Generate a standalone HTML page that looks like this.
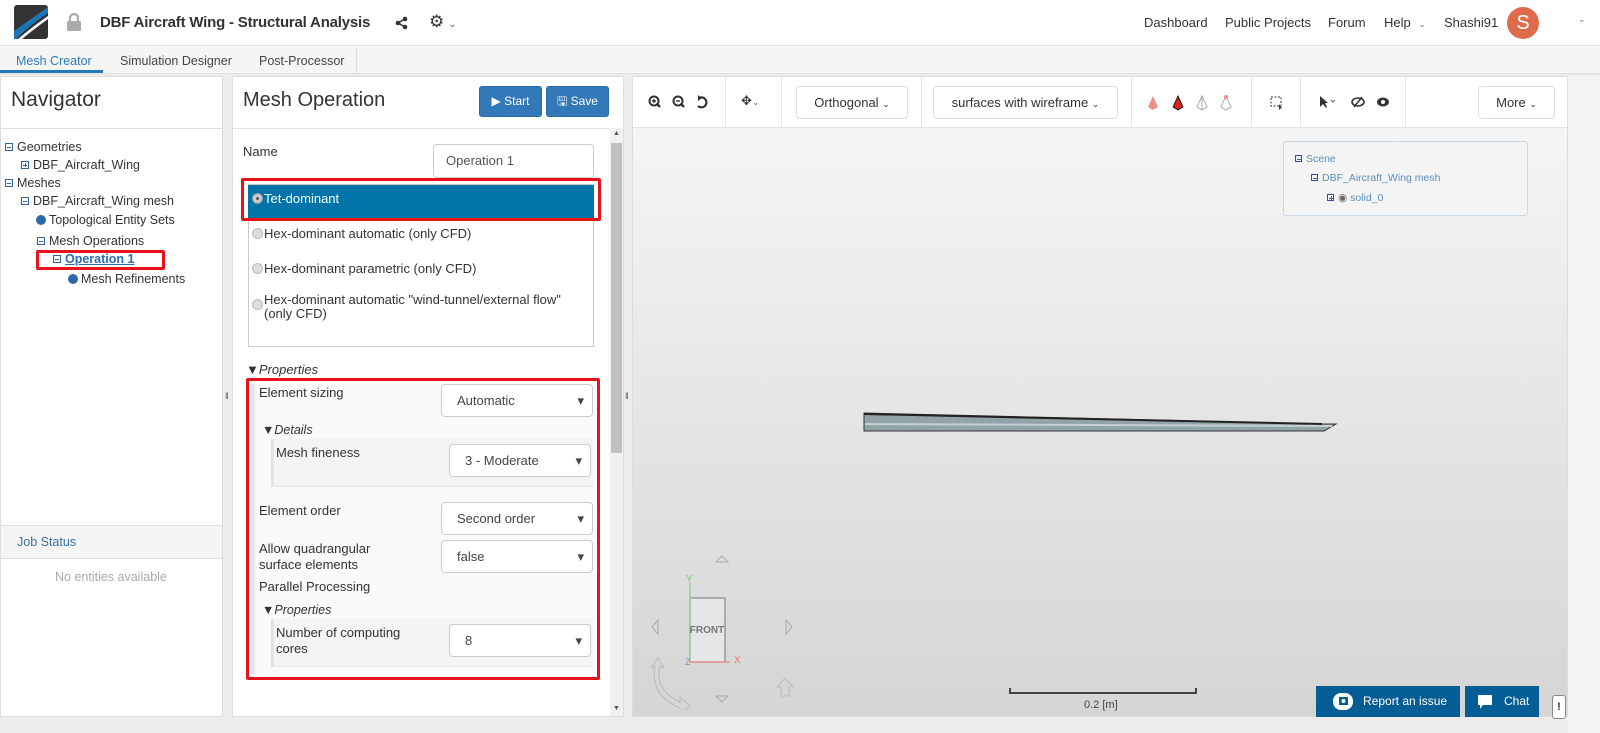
<!DOCTYPE html>
<html><head><meta charset="utf-8"><style>
*{box-sizing:border-box;margin:0;padding:0}
body{width:1600px;height:733px;overflow:hidden;background:#ececec;font-family:"Liberation Sans",sans-serif;color:#333;position:relative;font-size:13px}
.a{position:absolute}
.hdr{left:0;top:0;width:1600px;height:46px;background:#fff;border-bottom:1px solid #e3e3e3}
.nav{font-size:13px;color:#333;top:15px}
.tabs{left:0;top:46px;width:1600px;height:28px;background:#f5f5f5;border-bottom:1px solid #e0e0e0}
.tab{top:0;height:28px;line-height:28px;font-size:12.5px;color:#444}
.panel{background:#fff;border:1px solid #ddd}
.tree div{position:absolute;font-size:12.5px;color:#333;white-space:nowrap}
.mi{display:inline-block;width:8px;height:8px;border:1px solid #34679c;margin-right:4px;position:relative;top:0px}
.mi:after{content:"";position:absolute;left:1px;top:3px;width:4px;height:1px;background:#34679c}
.pi:before{content:"";position:absolute;left:3px;top:1px;width:1px;height:4px;background:#34679c}
.dot{display:inline-block;width:10px;height:10px;border-radius:50%;background:#2c6aa8;margin-right:3px;position:relative;top:1px}
.sel{background:#fff;border:1px solid #ccc;border-radius:4px;height:33px;font-size:13px;color:#444;line-height:31px;padding-left:15px}
.sel:after{content:"▾";position:absolute;right:8px;top:0;font-size:13px;color:#444}
.lbl{font-size:13px;color:#333}
.rad{display:inline-block;width:11px;height:11px;border-radius:50%;background:#ddd;border:1px solid #bbb;margin-right:1px;position:relative;top:1px}
.tb{border:1px solid #ddd;border-radius:4px;height:33px;line-height:31px;font-size:13px;color:#333;text-align:center;background:#fff}
.sep{width:1px;height:52px;background:#e5e5e5;top:76px}
.ic{font-size:13px;color:#333;top:94px}
</style></head><body>
<div class="a hdr"></div>
<svg class="a" style="left:14px;top:5px" width="34" height="34" viewBox="0 0 34 34"><rect width="34" height="34" rx="3" fill="#333"/><path d="M0 26 Q14 16 34 2 V8 Q16 20 2 34 H0Z" fill="#1b76b8"/><path d="M4 34 Q18 22 34 11 V14 Q20 24 8 34Z" fill="#fff"/></svg>
<svg class="a" style="left:66px;top:12px" width="16" height="20"><path d="M4 9 V6 a4 4 0 0 1 8 0 V9" stroke="#aaa" stroke-width="2.2" fill="none"/><rect x="1" y="9" width="14" height="10" rx="1" fill="#aaa"/></svg>
<div class="a" style="left:100px;top:14px;font-size:15px;font-weight:bold;color:#333;letter-spacing:-0.2px;white-space:nowrap">DBF Aircraft Wing - Structural Analysis</div>
<svg class="a" style="left:395px;top:16px" width="14" height="14"><circle cx="10" cy="3" r="2.3" fill="#333"/><circle cx="3" cy="7" r="2.3" fill="#333"/><circle cx="10" cy="11" r="2.3" fill="#333"/><path d="M10 3 L3 7 L10 11" stroke="#333" stroke-width="1.5" fill="none"/></svg>
<div class="a" style="left:429px;top:12px;font-size:17px;color:#333">⚙<span style="font-size:10px;color:#666;margin-left:4px">⌄</span></div>
<div class="a nav" style="left:1144px">Dashboard</div>
<div class="a nav" style="left:1225px">Public Projects</div>
<div class="a nav" style="left:1328px">Forum</div>
<div class="a nav" style="left:1384px">Help <span style="font-size:9px;color:#777;margin-left:4px">⌄</span></div>
<div class="a nav" style="left:1444px">Shashi91</div>
<div class="a" style="left:1507px;top:7px;width:32px;height:32px;border-radius:50%;background:#de6b4a;color:#fff;font-size:20px;text-align:center;line-height:32px">S</div>
<div class="a" style="left:1578px;top:14px;font-size:9px;color:#777">⌄</div>

<div class="a tabs"></div>
<div class="a tab" style="left:16px;top:47px;color:#2a7ab8">Mesh Creator</div>
<div class="a" style="left:0;top:70px;width:103px;height:3px;background:#1f79b8"></div>
<div class="a tab" style="left:120px;top:47px">Simulation Designer</div>
<div class="a tab" style="left:259px;top:47px">Post-Processor</div>
<div class="a" style="left:356px;top:47px;width:1px;height:26px;background:#ddd"></div>

<div class="a panel" style="left:0;top:76px;width:223px;height:641px"></div>
<div class="a" style="left:11px;top:88px;font-size:21px;color:#333">Navigator</div>
<div class="a" style="left:1px;top:128px;width:221px;height:1px;background:#ddd"></div>
<div class="tree">
<div style="left:5px;top:140px"><span class="mi"></span>Geometries</div>
<div style="left:21px;top:158px"><span class="mi pi"></span>DBF_Aircraft_Wing</div>
<div style="left:5px;top:176px"><span class="mi"></span>Meshes</div>
<div style="left:21px;top:194px"><span class="mi"></span>DBF_Aircraft_Wing mesh</div>
<div style="left:36px;top:213px"><span class="dot"></span>Topological Entity Sets</div>
<div style="left:37px;top:234px"><span class="mi"></span>Mesh Operations</div>
<div style="left:53px;top:252px"><span class="mi"></span><span style="color:#2a6db0;font-weight:bold;text-decoration:underline">Operation 1</span></div>
<div style="left:68px;top:272px"><span class="dot"></span>Mesh Refinements</div>
</div>
<div class="a" style="left:36px;top:250px;width:129px;height:20px;border:3px solid #e8121a;border-radius:2px"></div>
<div class="a" style="left:1px;top:525px;width:221px;height:34px;background:#f5f5f5;border-top:1px solid #ddd;border-bottom:1px solid #ddd"></div>
<div class="a" style="left:17px;top:535px;font-size:12.5px;color:#3a6fa0">Job Status</div>
<div class="a" style="left:55px;top:570px;font-size:12.5px;color:#aaa">No entities available</div>
<div class="a" style="left:225px;top:391px;font-size:9px;color:#555">‖</div>

<div class="a panel" style="left:232px;top:76px;width:392px;height:641px"></div>
<div class="a" style="left:243px;top:89px;font-size:20px;color:#333">Mesh Operation</div>
<div class="a" style="left:479px;top:86px;width:63px;height:31px;background:#3378b8;border:1px solid #2b6aa3;border-radius:3px;color:#fff;font-size:12px;line-height:29px;text-align:center">▶ Start</div>
<div class="a" style="left:546px;top:86px;width:63px;height:31px;background:#3378b8;border:1px solid #2b6aa3;border-radius:3px;color:#fff;font-size:12px;line-height:29px;text-align:center">🖫 Save</div>
<div class="a" style="left:233px;top:128px;width:390px;height:1px;background:#e3e3e3"></div>
<div class="a" style="left:610px;top:128px;width:13px;height:588px;background:#f1f1f1"></div>
<div class="a" style="left:611px;top:143px;width:11px;height:310px;background:#c1c1c1"></div>
<div class="a" style="left:613px;top:130px;font-size:7px;color:#555">▲</div>
<div class="a" style="left:613px;top:705px;font-size:7px;color:#555">▼</div>
<div class="a lbl" style="left:243px;top:144px">Name</div>
<div class="a" style="left:433px;top:144px;width:161px;height:34px;border:1px solid #ccc;border-radius:4px;background:#fff;font-size:13px;color:#555;line-height:32px;padding-left:12px">Operation 1</div>
<div class="a" style="left:248px;top:184px;width:346px;height:163px;border:1px solid #ccc;background:#fff"></div>
<div class="a" style="left:248px;top:185px;width:346px;height:33px;background:#0074a8;color:#fff;font-size:13px;line-height:28px;padding-left:4px"><span class="rad" style="background:#ccc;border-color:#999"><span style="position:absolute;left:3px;top:3px;width:3px;height:3px;border-radius:50%;background:#555"></span></span>Tet-dominant</div>
<div class="a" style="left:241px;top:178px;width:360px;height:43px;border:3px solid #e8121a;border-radius:2px"></div>
<div class="a lbl" style="left:252px;top:226px"><span class="rad"></span>Hex-dominant automatic (only CFD)</div>
<div class="a lbl" style="left:252px;top:261px"><span class="rad"></span>Hex-dominant parametric (only CFD)</div>
<div class="a lbl" style="left:252px;top:293px;line-height:14px"><span class="rad" style="top:6px"></span>Hex-dominant automatic "wind-tunnel/external flow"<br><span style="margin-left:12px">(only CFD)</span></div>
<div class="a" style="left:246px;top:362px;font-size:13px;font-style:italic">▼Properties</div>
<div class="a" style="left:251px;top:384px;width:343px;height:290px;background:#fafafa;border-left:4px solid #e5e5e5"></div>
<div class="a" style="left:246px;top:378px;width:354px;height:302px;border:3px solid #e8121a;border-radius:2px"></div>
<div class="a lbl" style="left:259px;top:385px">Element sizing</div>
<div class="a sel" style="left:441px;top:384px;width:152px">Automatic</div>
<div class="a" style="left:262px;top:423px;font-size:12.5px;font-style:italic">▼Details</div>
<div class="a" style="left:271px;top:439px;width:322px;height:48px;background:#f4f4f4;border-left:3px solid #e3e3e3;border-bottom:1px solid #e5e5e5"></div>
<div class="a lbl" style="left:276px;top:445px">Mesh fineness</div>
<div class="a sel" style="left:449px;top:444px;width:142px">3 - Moderate</div>
<div class="a lbl" style="left:259px;top:503px">Element order</div>
<div class="a sel" style="left:441px;top:502px;width:152px">Second order</div>
<div class="a lbl" style="left:259px;top:541px;line-height:16px">Allow quadrangular<br>surface elements</div>
<div class="a sel" style="left:441px;top:540px;width:152px">false</div>
<div class="a lbl" style="left:259px;top:579px">Parallel Processing</div>
<div class="a" style="left:262px;top:603px;font-size:12.5px;font-style:italic">▼Properties</div>
<div class="a" style="left:271px;top:619px;width:322px;height:48px;background:#f4f4f4;border-left:3px solid #e3e3e3;border-bottom:1px solid #e5e5e5"></div>
<div class="a lbl" style="left:276px;top:625px;line-height:16px">Number of computing<br>cores</div>
<div class="a sel" style="left:449px;top:624px;width:142px">8</div>
<div class="a" style="left:625px;top:391px;font-size:9px;color:#555">‖</div>

<div class="a" style="left:632px;top:76px;width:936px;height:641px;border:1px solid #ddd;background:linear-gradient(#f8f8f8,#e8e8e8 45%,#d5d5d5)"></div>
<div class="a" style="left:1568px;top:76px;width:32px;height:657px;background:#f4f4f4"></div>
<div class="a" style="left:633px;top:77px;width:934px;height:51px;background:#fff;border-bottom:1px solid #e3e3e3"></div>
<svg class="a" style="left:648px;top:95px" width="60" height="14"><circle cx="6" cy="6" r="4.5" stroke="#333" stroke-width="2" fill="none"/><path d="M9 9 L12 12" stroke="#333" stroke-width="2.4"/><path d="M4 6 H8 M6 4 V8" stroke="#333" stroke-width="1.4"/><circle cx="30" cy="6" r="4.5" stroke="#333" stroke-width="2" fill="none"/><path d="M33 9 L36 12" stroke="#333" stroke-width="2.4"/><path d="M28 6 H32" stroke="#333" stroke-width="1.4"/><path d="M51 3 A5 5 0 1 1 50 11" stroke="#333" stroke-width="2.2" fill="none"/><path d="M50 0 L54 3 L50 6Z" fill="#333"/></svg>
<div class="a sep" style="left:725px"></div>
<div class="a ic" style="left:741px;top:93px">✥<span style="font-size:9px;color:#666">⌄</span></div>
<div class="a sep" style="left:781px"></div>
<div class="a tb" style="left:796px;top:86px;width:112px">Orthogonal <span style="font-size:9px">⌄</span></div>
<div class="a sep" style="left:921px"></div>
<div class="a tb" style="left:933px;top:86px;width:185px">surfaces with wireframe <span style="font-size:9px">⌄</span></div>
<div class="a sep" style="left:1131px"></div>
<svg class="a" style="left:1145px;top:95px" width="100" height="16"><path d="M8 1 L3 12 L8 15 L13 12Z" fill="#e89088"/><path d="M33 1 L28 12 L33 15 L38 12Z" fill="#d8231a" stroke="#000" stroke-width="0.8"/><path d="M57 1 L52 12 L57 15 L62 12Z M57 1 V15" fill="none" stroke="#aaa"/><path d="M81 1 L76 12 L81 15 L86 12Z" fill="none" stroke="#aaa"/><circle cx="81" cy="2" r="2" fill="#e89088"/></svg>
<div class="a sep" style="left:1251px"></div>
<svg class="a" style="left:1270px;top:96px" width="14" height="14"><rect x="1" y="1" width="10" height="9" fill="none" stroke="#333" stroke-dasharray="2 1.5"/><path d="M9 8 L9 14 L11 12 L13 14Z" fill="#333"/></svg>
<div class="a sep" style="left:1300px"></div>
<svg class="a" style="left:1318px;top:95px" width="75" height="14"><path d="M2 1 V12 L5 9 L8 13 L9 12 L7 8 H10Z" fill="#333"/><path d="M13 5 L15 7 L17 5" stroke="#666" fill="none"/><ellipse cx="40" cy="7" rx="6" ry="4" fill="none" stroke="#333" stroke-width="1.6"/><path d="M36 12 L44 2" stroke="#333" stroke-width="1.5"/><ellipse cx="65" cy="7" rx="6" ry="4.5" fill="#333"/><circle cx="65" cy="7" r="2" fill="#fff"/></svg>
<div class="a sep" style="left:1405px"></div>
<div class="a tb" style="left:1478px;top:86px;width:77px">More <span style="font-size:9px">⌄</span></div>

<div class="a" style="left:1283px;top:141px;width:245px;height:75px;border:1px solid #c8d8e6;border-radius:3px;background:#f4f4f4"></div>
<div class="a" style="left:1295px;top:153px;font-size:10.5px;color:#5b8fb9"><span class="mi" style="width:7px;height:7px;border-color:#44a"></span>Scene</div>
<div class="a" style="left:1311px;top:172px;font-size:10.5px;color:#5b8fb9"><span class="mi" style="width:7px;height:7px;border-color:#44a"></span>DBF_Aircraft_Wing mesh</div>
<div class="a" style="left:1327px;top:192px;font-size:10.5px;color:#5b8fb9"><span class="mi pi" style="width:7px;height:7px;border-color:#44a"></span><span style="color:#666">◉</span> solid_0</div>

<svg class="a" style="left:862px;top:410px" width="478" height="24"><path d="M2 3 L460 14 L474 14 L462 21 L2 21Z" fill="#93a4a8" stroke="#333" stroke-width="1"/><path d="M2 4 L460 14" stroke="#222" stroke-width="2"/><path d="M3 14 L470 16" stroke="#c4d0d2" stroke-width="2"/></svg>

<svg class="a" style="left:640px;top:550px" width="160" height="160"><path d="M82 6 L76 12 H88Z" fill="none" stroke="#aaa"/><path d="M18 70 L12 77 L18 84Z" fill="none" stroke="#aaa"/><path d="M146 70 L152 77 L146 84Z" fill="none" stroke="#aaa"/><path d="M76 146 L82 152 L88 146Z" fill="none" stroke="#aaa"/><rect x="50" y="48" width="35" height="64" fill="#e6e6e6" stroke="#888" stroke-width="1.2"/><text x="67" y="83" font-size="10" font-weight="bold" fill="#777" text-anchor="middle" font-family="Liberation Sans">FRONT</text><path d="M50 112 V33" stroke="#7c7" /><text x="46" y="32" font-size="10" fill="#7c7" font-family="Liberation Sans">Y</text><path d="M50 112 H90" stroke="#e77"/><text x="94" y="113" font-size="10" fill="#e77" font-family="Liberation Sans">X</text><text x="45" y="115" font-size="9" fill="#88c" font-family="Liberation Sans">Z</text><path d="M20 116 Q14 140 40 152 L40 147 L50 156 L40 163 L40 158 Q10 146 15 116 L11 118 L18 108 L24 118Z" fill="none" stroke="#bbb"/><path d="M145 128 L137 137 H141 V146 H149 V137 H153Z" fill="none" stroke="#bbb"/></svg>

<div class="a" style="left:1009px;top:688px;width:188px;height:6px;border:2px solid #444;border-top:none"></div>
<div class="a" style="left:1084px;top:699px;font-size:11px;color:#444">0.2 [m]</div>

<div class="a" style="left:1316px;top:686px;width:144px;height:31px;background:#045d95;color:#fff;font-size:12px;line-height:31px;padding-left:47px">Report an issue</div>
<svg class="a" style="left:1330px;top:691px" width="28" height="22"><rect x="3" y="2" width="20" height="17" rx="8" fill="#fff"/><rect x="9" y="6" width="9" height="8" fill="#045d95"/><circle cx="13.5" cy="10" r="2" fill="#fff"/></svg>
<div class="a" style="left:1465px;top:686px;width:74px;height:31px;background:#045d95;color:#fff;font-size:12px;line-height:31px;padding-left:39px">Chat</div>
<svg class="a" style="left:1477px;top:694px" width="18" height="18"><path d="M1 1 H15 V11 H6 L3 15 V11 H1Z" fill="#fff"/></svg>
<div class="a" style="left:1552px;top:695px;width:14px;height:24px;border:1px solid #888;border-radius:3px;background:#fff;font-size:11px;text-align:center;line-height:22px;font-weight:bold">!</div>
</body></html>
